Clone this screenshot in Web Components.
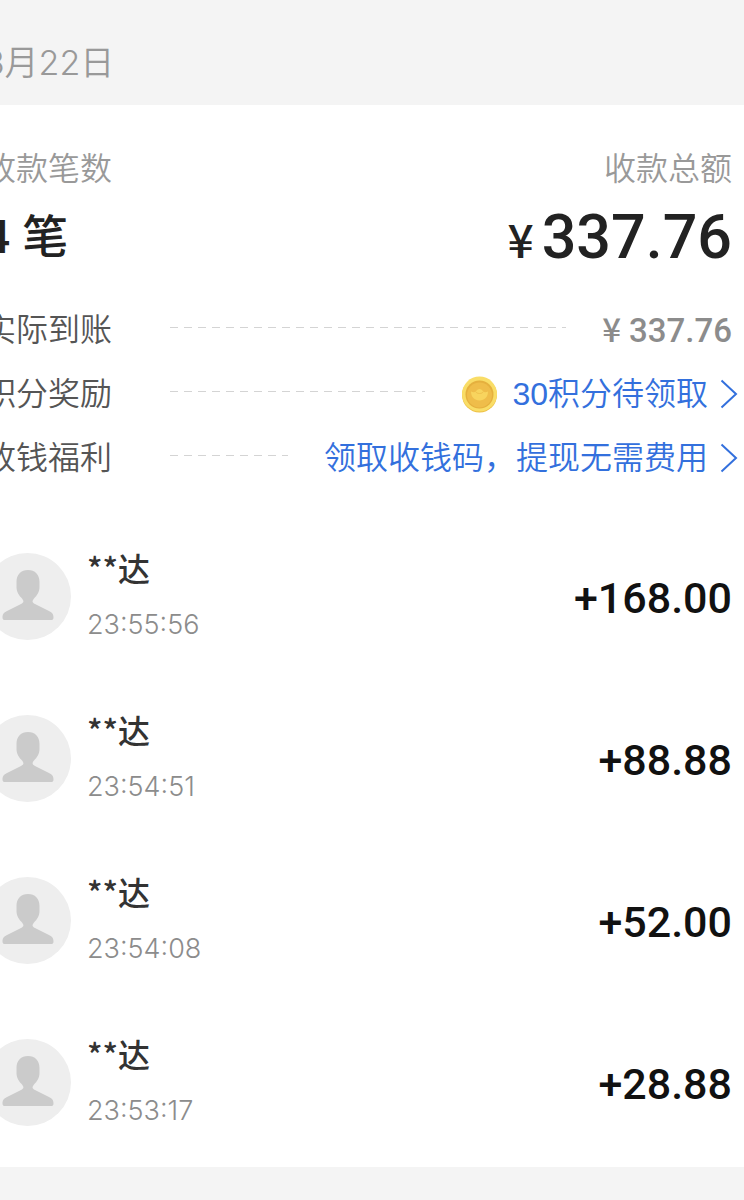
<!DOCTYPE html>
<html lang="zh-CN">
<head>
<meta charset="utf-8">
<meta name="viewport" content="width=device-width, initial-scale=1">
<title>收款记录</title>
<style>
  html { background: #f4f4f4; }
  body {
    margin: 0;
    overflow-x: hidden;
    font-family: Inter, "Noto Sans CJK SC", sans-serif;
    --bleed: 16px;
    --num: Roboto, "Noto Sans CJK SC", sans-serif;
    --cjk: "Noto Sans CJK SC", sans-serif;
  }
</style>
</head>
<body>
<receipt-page>
  <day-header>3月22日</day-header>
  <receipt-card>
    <day-total slot="total" count="4" amount="337.76"></day-total>
    <detail-row slot="detail" label="实际到账"><money-text>337.76</money-text></detail-row>
    <detail-row slot="detail" label="积分奖励"><action-link coin>30积分待领取</action-link></detail-row>
    <detail-row slot="detail" label="收钱福利"><action-link>领取收钱码，提现无需费用</action-link></detail-row>
    <payment-item time="23:55:56" amount="+168.00">**达</payment-item>
    <payment-item time="23:54:51" amount="+88.88">**达</payment-item>
    <payment-item time="23:54:08" amount="+52.00">**达</payment-item>
    <payment-item time="23:53:17" amount="+28.88">**达</payment-item>
  </receipt-card>
</receipt-page>
<script>
const define = (name, render) => customElements.define(name, class extends HTMLElement {
  constructor() {
    super();
    this.attachShadow({ mode: 'open' });
  }
  connectedCallback() {
    this.shadowRoot.innerHTML = render(this);
  }
});

define('receipt-page', () => `
  <style>:host { display: block; margin-left: calc(-1 * var(--bleed)); }</style>
  <main><slot></slot></main>`);

define('day-header', () => `
  <style>
    :host { display: block; padding: 39px 0 18px; color: #999; }
    h1 { margin: 0; font-size: 34px; line-height: 48px; font-weight: 350; }
  </style>
  <h1><slot></slot></h1>`);

define('receipt-card', () => `
  <style>
    :host { display: block; background: #fff; padding: 44px 12px 4px 0; }
    .details { padding: 12px 0 26px; }
  </style>
  <slot name="total"></slot>
  <div class="details"><slot name="detail"></slot></div>
  <slot></slot>`);

define('day-total', el => `
  <style>
    :host { display: flex; justify-content: space-between; }
    dl { margin: 0; }
    dt { font-size: 32px; line-height: 40px; color: #999; font-weight: 350; }
    dd { margin: 0; height: 96px; display: flex; align-items: baseline; color: #222; font-family: var(--num); font-weight: 500; line-height: 96px; }
    .count { gap: 12px; font-size: 46px; }
    .sum { gap: 8px; font-size: 61px; }
    .sum small { font-size: 46px; line-height: 92px; font-family: var(--cjk); }
    .right dt { text-align: right; }
  </style>
  <dl><dt>收款笔数</dt><dd class="count"><span>${el.getAttribute('count')}</span><span>笔</span></dd></dl>
  <dl class="right"><dt>收款总额</dt><dd class="sum"><small>¥</small><span>${el.getAttribute('amount')}</span></dd></dl>`);

define('detail-row', el => `
  <style>
    :host { display: flex; align-items: center; height: 64px; font-size: 32px; font-weight: 350; }
    .label { color: #555; line-height: 40px; padding-top: 2px; }
    .rule {
      flex: 1; height: 1px; margin: 0 36px 4px 58px;
      background: repeating-linear-gradient(90deg, #d4d4d4 0 8px, transparent 8px 14px);
    }
  </style>
  <span class="label">${el.getAttribute('label')}</span><span class="rule"></span><slot></slot>`);

define('money-text', () => `
  <style>
    :host { display: flex; gap: 8px; align-items: baseline; color: #8c8c8c; font-family: var(--num); font-size: 33px; font-weight: 500; line-height: 40px; }
    .sign { font-family: var(--cjk); }
  </style>
  <span class="sign">¥</span><span><slot></slot></span>`);

define('action-link', el => `
  <style>
    :host { display: block; margin-right: -6px; }
    a { display: flex; align-items: center; color: #3370dd; text-decoration: none; line-height: 40px; font-family: "Liberation Sans", var(--cjk); padding-top: 2px; }
    .coin { margin-right: 14px; }
    .arrow { margin-left: 12px; }
  </style>
  <a href="#">
    ${el.hasAttribute('coin') ? `
    <svg class="coin" width="37" height="37" viewBox="0 0 37 37" aria-hidden="true">
      <circle cx="18.5" cy="19" r="17.5" fill="#edc046"/>
      <circle cx="18.5" cy="18" r="17.5" fill="#f9dd67"/>
      <circle cx="18.5" cy="18.5" r="14" fill="#e5b03e"/>
      <circle cx="18.5" cy="19" r="12.5" fill="#efbd4a"/>
      <path d="M10 15.500c2 1 3.500 1 5 0 1-3.500 6-3.500 7 0 1.500 1 3 1 5 0 0 5.500-3.500 9-8.500 9s-8.500-3.500-8.500-9z" fill="#f8d45e"/>
      <path d="M15 16c1 2 6 2 7 0" fill="none" stroke="#efc04c" stroke-width="1"/>
    </svg>` : ''}
    <slot></slot>
    <svg class="arrow" width="18" height="30" viewBox="0 0 18 30" fill="none" stroke="currentColor" stroke-width="2" aria-hidden="true">
      <path d="M1.500 1.500 16 15 1.500 28.500"/>
    </svg>
  </a>`);

define('payment-item', el => `
  <style>
    :host { display: flex; align-items: center; height: 162px; }
    .avatar { flex: none; margin-right: 16px; }
    .who { flex: 1; }
    .name { font-family: var(--cjk); font-size: 32px; line-height: 44px; font-weight: 500; color: #333; }
    time { display: block; margin-top: 14px; font-size: 27px; line-height: 44px; font-weight: 300; color: #8c8c8c; }
    .amount { font-family: var(--num); font-size: 43px; line-height: 60px; font-weight: 500; color: #111; padding-top: 4px; }
  </style>
  <svg class="avatar" width="87" height="87" viewBox="0 0 87 87" aria-hidden="true">
    <circle cx="43.5" cy="43.5" r="43.500" fill="#eee"/>
    <path d="M44 17C51 17 55.500 21.500 55.500 29V34C55.500 39 53 42.500 50 45.500C48 48 48 49.500 51 51L65 58C68.500 59.800 69.500 61.500 69.500 64.500C69.500 66.500 68.500 67 67 67H21C19.500 67 18.500 66.500 18.500 64.500C18.500 61.500 19.500 59.800 23 58L37 51C40 49.500 40 48 38 45.500C35 42.500 32.500 39 32.500 34V29C32.500 21.500 37 17 44 17Z" fill="#cbcbcb"/>
  </svg>
  <div class="who"><div class="name"><slot></slot></div><time>${el.getAttribute('time')}</time></div>
  <div class="amount">${el.getAttribute('amount')}</div>`);
</script>
</body>
</html>
